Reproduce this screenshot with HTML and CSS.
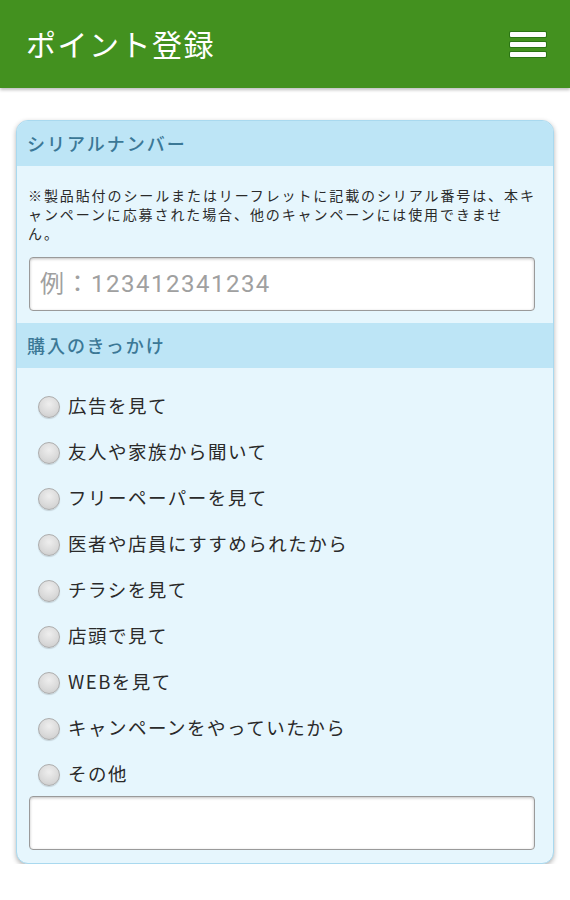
FILE: index.html
```html
<!DOCTYPE html>
<html lang="ja">
<head>
<meta charset="utf-8">
<link rel="stylesheet" href="styles.css">
</head>
<body>
<header class="appbar">
  <h1 class="title">ポイント登録</h1>
  <div class="menu"><span></span><span></span><span></span></div>
</header>
<main class="page">
  <section class="card">
    <div class="sec-head">シリアルナンバー</div>
    <div class="sec-body">
      <p class="note">※製品貼付のシールまたはリーフレットに記載のシリアル番号は、本キ<br>ャンペーンに応募された場合、他のキャンペーンには使用できませ<br>ん。</p>
      <input class="field" type="text" placeholder="例：123412341234">
    </div>
    <div class="sec-head">購入のきっかけ</div>
    <div class="sec-body list-body">
      <ul class="radios">
        <li><span class="radio"></span>広告を見て</li>
        <li><span class="radio"></span>友人や家族から聞いて</li>
        <li><span class="radio"></span>フリーペーパーを見て</li>
        <li><span class="radio"></span>医者や店員にすすめられたから</li>
        <li><span class="radio"></span>チラシを見て</li>
        <li><span class="radio"></span>店頭で見て</li>
        <li><span class="radio"></span>WEBを見て</li>
        <li><span class="radio"></span>キャンペーンをやっていたから</li>
        <li><span class="radio"></span>その他</li>
      </ul>
      <input class="field" type="text">
    </div>
  </section>
</main>
</body>
</html>
```
FILE: styles.css
```css
* { box-sizing: border-box; }
html, body { margin: 0; padding: 0; background: #fff; }
body { font-family: "Noto Sans CJK JP", "Noto Sans", sans-serif; color: #333; }
.appbar {
  height: 88px;
  background: #43911f;
  display: flex;
  align-items: center;
  justify-content: space-between;
  padding: 0 24px 0 26px;
  box-shadow: 0 2px 3px rgba(0,0,0,0.25);
}
.title {
  margin: 0;
  color: #fff;
  font-size: 30px;
  font-weight: 400;
  line-height: 1;
  letter-spacing: 1.5px;
  padding-bottom: 2px;
}
.menu { display: flex; flex-direction: column; gap: 5px; width: 36px; }
.menu span { display: block; height: 5px; background: #fff; border-radius: 1px; box-shadow: 0 0 0 1px rgba(20,90,10,0.5); }
.page { padding: 32px 16px 0 16px; }
.card {
  width: 538px;
  border: 1px solid #a9d9ef;
  border-radius: 12px;
  overflow: hidden;
  background: #e6f6fd;
  box-shadow: 0 2px 5px rgba(0,0,0,0.3);
}
.sec-head {
  height: 45px;
  background: #bde5f6;
  color: #3b7896;
  font-size: 18px;
  font-weight: 500;
  letter-spacing: 2px;
  line-height: 45px;
  padding-left: 10px;
}
.sec-body { padding: 20px 12px 12px 12px; }
.note {
  margin: 0 -6px 14px -1px;
  font-size: 14px;
  line-height: 19px;
  color: #2a2a2a;
  letter-spacing: 1.9px;
  white-space: nowrap;
}
.field {
  display: block;
  width: 506px;
  height: 54px;
  border: 1px solid #9a9a9a;
  border-radius: 4px;
  background: #fff;
  box-shadow: inset 0 1px 3px rgba(0,0,0,0.25);
  font-family: "Roboto", "Noto Sans CJK JP", sans-serif;
  font-size: 24px;
  letter-spacing: 1.5px;
  padding: 0 10px;
  outline: none;
}
.field::placeholder { color: #a0a0a0; }
.list-body { padding: 14px 12px 13px 12px; }
.radios { list-style: none; margin: 0; padding: 0; }
.radios li {
  height: 46px;
  display: flex;
  align-items: center;
  font-size: 18.5px;
  letter-spacing: 1.5px;
  color: #2a2a2a;
  padding-left: 9px;
}
.radio {
  width: 22px;
  height: 22px;
  border-radius: 50%;
  border: 1px solid #adadad;
  background: radial-gradient(circle at 50% 35%, #eeeeee 0%, #d9d9d9 60%, #c6c6c6 100%);
  box-shadow: 0 1px 1px rgba(0,0,0,0.15);
  margin-right: 8px;
  margin-top: 4px;
  flex: none;
}
```
